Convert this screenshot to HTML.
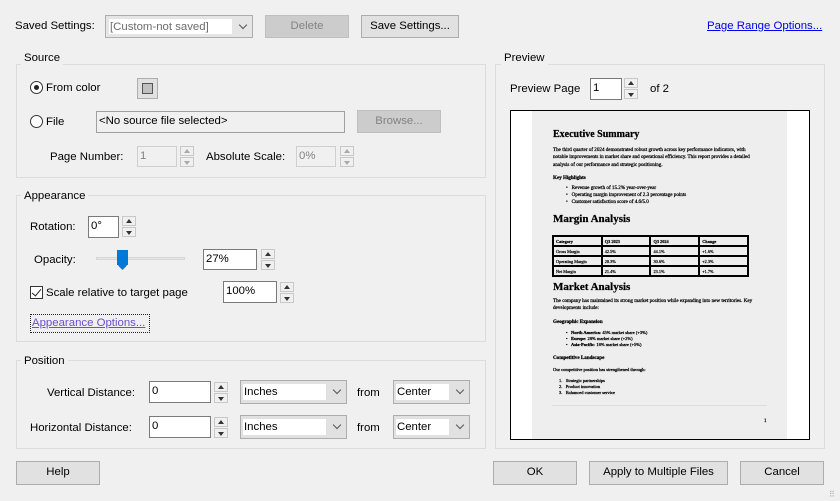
<!DOCTYPE html>
<html><head><meta charset="utf-8"><style>
*{box-sizing:border-box;margin:0;padding:0}
body{width:840px;height:501px;background:#f0f0f0;font-family:"Liberation Sans",sans-serif;font-size:11.4px;color:#000;position:relative;overflow:hidden}
.a{position:absolute;white-space:nowrap}
.t{position:absolute;line-height:14px;white-space:nowrap}
.grp{position:absolute;border:1px solid #dcdcdc}
.gl{position:absolute;background:#f0f0f0;padding:0 3px;line-height:14px}
.btn{position:absolute;border:1px solid #adadad;background:#e1e1e1;text-align:center;line-height:21px}
.dis{background:#cccccc;border-color:#bfbfbf;color:#838383}
.in{position:absolute;background:#fff;border:1px solid #7a7a7a;padding-left:2px;line-height:18px}
.ind{background:#f0f0f0;border-color:#cfcfcf;color:#838383}
.sp{position:absolute;width:14px}
.sp div{height:10px;border:1px solid #c8c8c8;background:#f0f0f0;position:relative;margin-bottom:1px}
.sp div:before{content:"";position:absolute;left:3px;border-left:3px solid transparent;border-right:3px solid transparent}
.sp .u:before{top:2px;border-bottom:4px solid #333}
.sp .d:before{top:3px;border-top:4px solid #333}
.sp.dd .u:before{border-bottom-color:#aaa}.sp.dd .d:before{border-top-color:#aaa}
.cb{position:absolute;border:1px solid #adadad;background:#e1e1e1}
.cb span{position:absolute;left:4px;right:20px;top:3px;bottom:3px;background:#fff;line-height:16px;padding-left:1px}
.cb i{position:absolute;right:6px;top:6px;width:6px;height:6px;border-right:1px solid #555;border-bottom:1px solid #555;transform:rotate(45deg)}
.pg{font-family:"Liberation Serif",serif;position:absolute;white-space:nowrap;font-size:5px;line-height:7px;color:#000;-webkit-text-stroke:0.25px #000}
.b{font-weight:bold}
table{border-collapse:collapse;position:absolute;left:552px;top:235px;width:197px;font-family:"Liberation Serif",serif;font-size:4.3px;-webkit-text-stroke:0.2px #000}
td{border:2px solid #000;height:10px;padding-left:2px;width:49px}
</style></head><body>
<div class="t" style="left:15px;top:19px">Saved Settings:</div>
<div class="cb" style="left:105px;top:15px;width:148px;height:23px;background:#e5e5e5"><span style="color:#6d6d6d;left:3px">[Custom-not saved]</span><i></i></div>
<div class="btn dis" style="left:265px;top:15px;width:84px;height:23px">Delete</div>
<div class="btn" style="left:361px;top:15px;width:98px;height:23px">Save Settings...</div>
<div class="t" style="left:707px;top:19px;color:#0000ee;text-decoration:underline">Page Range Options...</div>

<div class="grp" style="left:16px;top:64px;width:470px;height:114px"></div>
<div class="gl" style="left:21px;top:51px">Source</div>
<div class="a" style="left:30px;top:81px;width:13px;height:13px;border:1px solid #333;border-radius:50%;background:#fff"><div style="position:absolute;left:3px;top:3px;width:5px;height:5px;border-radius:50%;background:#222"></div></div>
<div class="t" style="left:46px;top:81px">From color</div>
<div class="a" style="left:137px;top:78px;width:21px;height:21px;border:1px solid #adadad;background:#e1e1e1"><div style="position:absolute;left:4px;top:4px;width:11px;height:11px;border:1px solid #555;background:#c0c0c0"></div></div>
<div class="a" style="left:30px;top:115px;width:13px;height:13px;border:1px solid #333;border-radius:50%;background:#fff"></div>
<div class="t" style="left:46px;top:115px">File</div>
<div class="in ind" style="left:96px;top:111px;width:249px;height:22px;color:#000;background:#f0f0f0;border-color:#a0a0a0">&lt;No source file selected&gt;</div>
<div class="btn dis" style="left:357px;top:110px;width:84px;height:23px">Browse...</div>
<div class="t" style="left:50px;top:150px">Page Number:</div>
<div class="in ind" style="left:137px;top:146px;width:40px;height:21px">1</div>
<div class="sp dd" style="left:180px;top:146px"><div class="u"></div><div class="d"></div></div>
<div class="t" style="left:206px;top:150px">Absolute Scale:</div>
<div class="in ind" style="left:296px;top:146px;width:40px;height:21px">0%</div>
<div class="sp dd" style="left:340px;top:146px"><div class="u"></div><div class="d"></div></div>

<div class="grp" style="left:16px;top:195px;width:470px;height:147px"></div>
<div class="gl" style="left:21px;top:189px">Appearance</div>
<div class="t" style="left:30px;top:220px">Rotation:</div>
<div class="in" style="left:88px;top:216px;width:31px;height:22px">0°</div>
<div class="sp" style="left:122px;top:216px"><div class="u"></div><div class="d"></div></div>
<div class="t" style="left:34px;top:253px">Opacity:</div>
<div class="a" style="left:96px;top:257px;width:89px;height:3px;background:#e7e7e7;border:1px solid #d6d6d6"></div>
<div class="a" style="left:117px;top:250px;width:11px;height:15px;background:#0078d7"></div>
<div class="a" style="left:118px;top:261px;width:9px;height:9px;background:#0078d7;transform:rotate(45deg) scale(.7)"></div>
<div class="in" style="left:203px;top:249px;width:54px;height:21px">27%</div>
<div class="sp" style="left:261px;top:249px"><div class="u"></div><div class="d"></div></div>
<div class="a" style="left:30px;top:286px;width:13px;height:13px;border:1px solid #333;background:#fff"><div style="position:absolute;left:3px;top:0px;width:5px;height:9px;border-right:1.3px solid #222;border-bottom:1.3px solid #222;transform:rotate(40deg)"></div></div>
<div class="t" style="left:46px;top:286px">Scale relative to target page</div>
<div class="in" style="left:223px;top:281px;width:54px;height:22px">100%</div>
<div class="sp" style="left:280px;top:282px"><div class="u"></div><div class="d"></div></div>
<div class="a" style="left:30px;top:314px;width:120px;height:19px;border:1px dotted #222;color:#6a4fcf;text-decoration:underline;line-height:16px;padding-left:1px">Appearance Options...</div>

<div class="grp" style="left:16px;top:360px;width:470px;height:89px"></div>
<div class="gl" style="left:21px;top:354px">Position</div>
<div class="t" style="left:47px;top:386px">Vertical Distance:</div>
<div class="in" style="left:149px;top:381px;width:62px;height:22px">0</div>
<div class="sp" style="left:214px;top:382px"><div class="u"></div><div class="d"></div></div>
<div class="cb" style="left:240px;top:380px;width:107px;height:24px"><span style="left:2px;right:20px">Inches</span><i></i></div>
<div class="t" style="left:357px;top:386px">from</div>
<div class="cb" style="left:393px;top:380px;width:77px;height:24px"><span style="left:2px">Center</span><i></i></div>
<div class="t" style="left:30px;top:421px">Horizontal Distance:</div>
<div class="in" style="left:149px;top:416px;width:62px;height:22px">0</div>
<div class="sp" style="left:214px;top:417px"><div class="u"></div><div class="d"></div></div>
<div class="cb" style="left:240px;top:415px;width:107px;height:24px"><span style="left:2px;right:20px">Inches</span><i></i></div>
<div class="t" style="left:357px;top:421px">from</div>
<div class="cb" style="left:393px;top:415px;width:77px;height:24px"><span style="left:2px">Center</span><i></i></div>

<div class="btn" style="left:16px;top:461px;width:84px;height:24px">Help</div>

<div class="grp" style="left:495px;top:64px;width:330px;height:385px"></div>
<div class="gl" style="left:501px;top:51px">Preview</div>
<div class="t" style="left:510px;top:82px">Preview Page</div>
<div class="in" style="left:590px;top:78px;width:32px;height:22px">1</div>
<div class="sp" style="left:624px;top:78px"><div class="u"></div><div class="d"></div></div>
<div class="t" style="left:650px;top:82px">of 2</div>

<div class="a" style="left:510px;top:110px;width:300px;height:330px;background:#fff;border:1px solid #000"></div>
<div class="a" style="left:532px;top:111px;width:255px;height:328px;background:#eeeeee"></div>
<div class="pg b" style="left:553px;top:129px;font-size:10px;line-height:12px">Executive Summary</div>
<div class="pg" style="left:553px;top:147px;font-size:5.1px;line-height:7.3px">The third quarter of 2024 demonstrated robust growth across key performance indicators, with<br>notable improvements in market share and operational efficiency. This report provides a detailed<br>analysis of our performance and strategic positioning.</div>
<div class="pg b" style="left:553px;top:175px;font-size:5.1px">Key Highlights</div>
<div class="pg" style="left:566px;top:185px;font-size:5.1px">•&nbsp;&nbsp;&nbsp;Revenue growth of 15.2% year-over-year<br>•&nbsp;&nbsp;&nbsp;Operating margin improvement of 2.3 percentage points<br>•&nbsp;&nbsp;&nbsp;Customer satisfaction score of 4.6/5.0</div>
<div class="pg b" style="left:553px;top:213px;font-size:11px;line-height:13px">Margin Analysis</div>
<table><tr class="b"><td>Category</td><td>Q3 2023</td><td>Q3 2024</td><td>Change</td></tr><tr><td>Gross Margin</td><td>42.5%</td><td>44.1%</td><td>+1.6%</td></tr><tr><td>Operating Margin</td><td>28.3%</td><td>30.6%</td><td>+2.3%</td></tr><tr><td>Net Margin</td><td>21.4%</td><td>23.1%</td><td>+1.7%</td></tr></table>
<div class="pg b" style="left:553px;top:281px;font-size:11px;line-height:13px">Market Analysis</div>
<div class="pg" style="left:553px;top:298px;font-size:5.1px">The company has maintained its strong market position while expanding into new territories. Key<br>developments include:</div>
<div class="pg b" style="left:553px;top:319px;font-size:5.1px">Geographic Expansion</div>
<div class="pg" style="left:566px;top:330px;font-size:4.5px;line-height:6px">•&nbsp;&nbsp;&nbsp;<b>North America</b>: 45% market share (+3%)<br>•&nbsp;&nbsp;&nbsp;<b>Europe</b>: 28% market share (+2%)<br>•&nbsp;&nbsp;&nbsp;<b>Asia-Pacific</b>: 18% market share (+5%)</div>
<div class="pg b" style="left:553px;top:355px;font-size:5.1px">Competitive Landscape</div>
<div class="pg" style="left:553px;top:366px;font-size:4.5px">Our competitive position has strengthened through:</div>
<div class="pg" style="left:559px;top:378px;font-size:4.5px;line-height:6px">1.&nbsp;&nbsp;&nbsp;Strategic partnerships<br>2.&nbsp;&nbsp;&nbsp;Product innovation<br>3.&nbsp;&nbsp;&nbsp;Enhanced customer service</div>
<div class="a" style="left:552px;top:405px;width:215px;height:1px;background:#ddd"></div>
<div class="pg" style="left:764px;top:418px;font-size:5px">1</div>

<div class="btn" style="left:493px;top:461px;width:84px;height:24px">OK</div>
<div class="btn" style="left:589px;top:461px;width:139px;height:24px">Apply to Multiple Files</div>
<div class="btn" style="left:740px;top:461px;width:84px;height:24px">Cancel</div>
<div class="a" style="left:829px;top:491px;font-size:8px;color:#aaa;line-height:8px">⠿</div>
</body></html>
